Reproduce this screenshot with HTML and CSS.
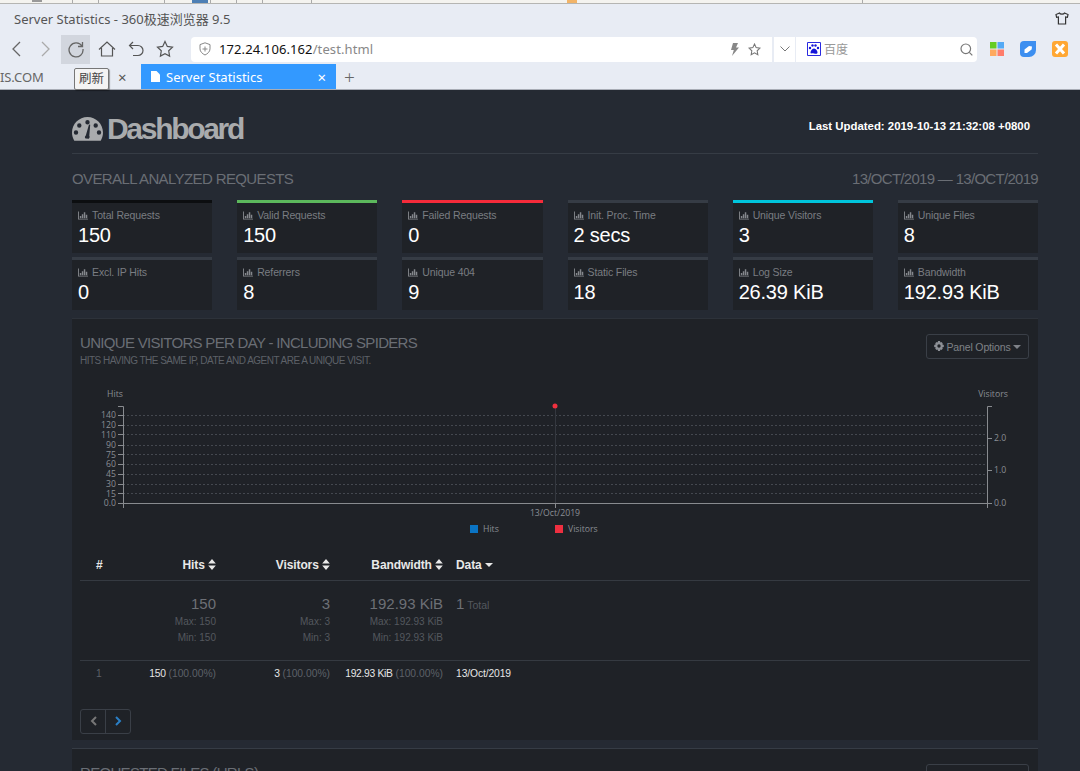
FILE: index.html
```html
<!DOCTYPE html>
<html lang="en">
<head>
<meta charset="UTF-8">
<meta name="viewport" content="width=device-width, initial-scale=1.0">
<title>Server Statistics</title>
<link rel="stylesheet" href="styles.css">
</head>
<body>

<svg class="defs" width="0" height="0">
    <symbol id="bars" viewBox="0 0 11 9">
        <path d="M0 0h1v8H11V9H0z"/>
        <path d="M2 5h1.600v2.500H2zM4.200 3h1.600v4.500H4.200zM6.400 .8h1.600v6.700H6.400zM8.600 3.800h1.600v3.700H8.600z"/>
    </symbol>
    <symbol id="sort" viewBox="0 0 8 11">
        <path d="M4 0l3.800 4.400H.2zM4 11L.2 6.600h7.600z"/>
    </symbol>
    <symbol id="caret" viewBox="0 0 8 4">
        <path d="M0 0h8L4 4z"/>
    </symbol>
</svg>

<div class="browser">
    <div class="other-window"></div>
    <div class="titlebar">
        <span>Server Statistics - 360极速浏览器 9.5</span>
        <svg class="shirt" width="14" height="13" viewBox="0 0 14 13" fill="none" stroke="#333" stroke-width="1.2">
            <path d="M4.5 1L1 2.5 1.6 5.4 3.4 5V12h7.2V5l1.8.4.6-2.9L9.500 1C9 2.500 5 2.500 4.500 1z"/>
        </svg>
    </div>
    <div class="toolbar">
        <svg class="nav-icon" width="16" height="18" viewBox="0 0 16 18" fill="none" stroke="#666" stroke-width="1.3">
            <path d="M11 2L4 9l7 7"/>
        </svg>
        <svg class="nav-icon" width="16" height="18" viewBox="0 0 16 18" fill="none" stroke="#aaa" stroke-width="1.3">
            <path d="M5 2l7 7-7 7"/>
        </svg>
        <div class="reload">
            <svg width="18" height="18" viewBox="0 0 18 18" fill="none" stroke="#666" stroke-width="1.3">
                <path d="M15 6.200A7 7 0 1 0 16 9"/>
                <path d="M15.500 2v4.500H11"/>
            </svg>
        </div>
        <svg class="nav-icon" width="18" height="18" viewBox="0 0 18 18" fill="none" stroke="#555" stroke-width="1.2">
            <path d="M1 9.500L9 2l8 7.500M3.500 8v8h11V8"/>
        </svg>
        <svg class="nav-icon" width="16" height="18" viewBox="0 0 16 18" fill="none" stroke="#555" stroke-width="1.2">
            <path d="M5 2L1.500 5.500 5 9M1.500 5.500H10a4.500 4.500 0 0 1 0 10H5"/>
        </svg>
        <svg class="nav-icon" width="18" height="18" viewBox="0 0 18 18" fill="none" stroke="#555" stroke-width="1.2">
            <path d="M9 1.500l2.300 4.900 5.200.7-3.800 3.700.9 5.300L9 13.600l-4.600 2.500.9-5.300L1.500 7.100l5.200-.7z"/>
        </svg>
        <div class="urlbar">
            <svg width="12" height="14" viewBox="0 0 12 14" fill="none" stroke="#888" stroke-width="1">
                <path d="M6 .8l5 1.800v4.200c0 3-2.500 5-5 6.200-2.500-1.200-5-3.200-5-6.200V2.600z"/>
                <path d="M6 4.500v5M3.500 7h5"/>
            </svg>
            <span class="url"><b>172.24.106.162</b>/test.html</span>
            <svg class="bolt" width="9" height="13" viewBox="0 0 9 13" fill="#888">
                <path d="M3 0h5L6 4.500h3L2 13l1.800-6H1z"/>
            </svg>
            <svg width="13" height="13" viewBox="0 0 18 18" fill="none" stroke="#777" stroke-width="1.500">
                <path d="M9 1.500l2.300 4.900 5.200.7-3.800 3.700.9 5.300L9 13.600l-4.600 2.500.9-5.300L1.500 7.100l5.200-.7z"/>
            </svg>
        </div>
        <div class="dropdown">
            <svg width="10" height="6" viewBox="0 0 10 6" fill="none" stroke="#777" stroke-width="1">
                <path d="M.5.500L5 5 9.500.500"/>
            </svg>
        </div>
        <div class="searchbar">
            <svg width="14" height="14" viewBox="0 0 14 14">
                <path fill="#fff" stroke="#2a2ae0" d="M.5.500h13v13H.5z"/>
                <path fill="#1414d8" d="M7 6.500c2 0 3.500 2.500 3.500 4S9 12 7 11.500 3.500 12 3.500 10.500 5 6.500 7 6.500z"/>
                <circle fill="#1414d8" cx="3" cy="6" r="1.200"/>
                <circle fill="#1414d8" cx="5.500" cy="3.500" r="1.200"/>
                <circle fill="#1414d8" cx="8.500" cy="3.500" r="1.200"/>
                <circle fill="#1414d8" cx="11" cy="6" r="1.200"/>
            </svg>
            <span class="search-text">百度</span>
            <svg class="search-icon" width="13" height="13" viewBox="0 0 13 13" fill="none" stroke="#777" stroke-width="1.200">
                <circle cx="5.800" cy="5.800" r="4.800"/>
                <path d="M9.300 9.300l3 3"/>
            </svg>
        </div>
        <div class="plugins">
            <svg width="14" height="14" viewBox="0 0 14 14">
                <path fill="#66cc22" d="M0 0h6.500v6.500H0z"/>
                <path fill="#55aaf5" d="M7.500 0H14v6.500H7.500z"/>
                <path fill="#ffa95e" d="M0 7.500h6.500V14H0z"/>
                <path fill="#ff7d6b" d="M7.500 7.500H14V14H7.500z"/>
            </svg>
            <svg width="16" height="16" viewBox="0 0 16 16">
                <path fill="#3d8ff0" d="M4 0h12v9a7 7 0 0 1-7 7H4a4 4 0 0 1-4-4V4a4 4 0 0 1 4-4z"/>
                <path fill="#fff" d="M4.500 8.500L9 5l3 .6-.4 3L7 12H4.500z"/>
            </svg>
            <svg width="16" height="16" viewBox="0 0 16 16">
                <rect fill="#ffa733" width="16" height="16" rx="3"/>
                <path fill="none" stroke="#fff" stroke-width="3" d="M4 3.500l8 9M12 3.500l-8 9"/>
            </svg>
        </div>
    </div>
    <div class="tabbar">
        <span class="tab-cut">IS.COM</span>
        <span class="tab-close">×</span>
        <div class="tab-active">
            <svg width="9" height="11" viewBox="0 0 9 11" fill="#fff">
                <path d="M0 0h5.500L9 3.500V11H0z"/>
            </svg>
            <span>Server Statistics</span>
            <span class="tab-x">×</span>
        </div>
        <span class="tab-new">+</span>
        <div class="tooltip">刷新</div>
    </div>
</div>

<div class="page">
    <div class="page-header">
        <h1>
            <svg width="31" height="24" viewBox="0 0 31 24" fill="#a9abad">
                <path fill-rule="evenodd" d="M15.500 0C7 0 0 7 0 15.500c0 3 .8 5.800 2.300 8.300h26.400c1.500-2.500 2.300-5.300 2.300-8.300C31 7 24 0 15.500 0zM15.500 3a2.200 2.200 0 1 1 0 4.400 2.200 2.200 0 0 1 0-4.400zM7.300 6.300a2.200 2.200 0 1 1 0 4.400 2.200 2.200 0 0 1 0-4.400zM23.700 6.300a2.200 2.200 0 1 1 0 4.400 2.200 2.200 0 0 1 0-4.400zM4 13.300a2.200 2.200 0 1 1 0 4.400 2.200 2.200 0 0 1 0-4.400zM27 13.300a2.200 2.200 0 1 1 0 4.400 2.200 2.200 0 0 1 0-4.400zM13.500 21.500c-.9-1-.8-2.300.3-3.100L17 7.500l1.200.3-.9 11c.6 1 .4 2.200-.5 2.900z"/>
            </svg>
            Dashboard
        </h1>
        <p class="last-updated">Last Updated: 2019-10-13 21:32:08 +0800</p>
    </div>

    <div class="overall-head">
        <h3>OVERALL ANALYZED REQUESTS</h3>
        <h3>13/OCT/2019 — 13/OCT/2019</h3>
    </div>

    <div class="cards">
        <div class="card black"><div class="card-label"><svg class="bars"><use href="#bars"/></svg>Total Requests</div><div class="card-value">150</div></div>
        <div class="card green"><div class="card-label"><svg class="bars"><use href="#bars"/></svg>Valid Requests</div><div class="card-value">150</div></div>
        <div class="card red"><div class="card-label"><svg class="bars"><use href="#bars"/></svg>Failed Requests</div><div class="card-value">0</div></div>
        <div class="card"><div class="card-label"><svg class="bars"><use href="#bars"/></svg>Init. Proc. Time</div><div class="card-value">2 secs</div></div>
        <div class="card cyan"><div class="card-label"><svg class="bars"><use href="#bars"/></svg>Unique Visitors</div><div class="card-value">3</div></div>
        <div class="card"><div class="card-label"><svg class="bars"><use href="#bars"/></svg>Unique Files</div><div class="card-value">8</div></div>
        <div class="card"><div class="card-label"><svg class="bars"><use href="#bars"/></svg>Excl. IP Hits</div><div class="card-value">0</div></div>
        <div class="card"><div class="card-label"><svg class="bars"><use href="#bars"/></svg>Referrers</div><div class="card-value">8</div></div>
        <div class="card"><div class="card-label"><svg class="bars"><use href="#bars"/></svg>Unique 404</div><div class="card-value">9</div></div>
        <div class="card"><div class="card-label"><svg class="bars"><use href="#bars"/></svg>Static Files</div><div class="card-value">18</div></div>
        <div class="card"><div class="card-label"><svg class="bars"><use href="#bars"/></svg>Log Size</div><div class="card-value">26.39 KiB</div></div>
        <div class="card"><div class="card-label"><svg class="bars"><use href="#bars"/></svg>Bandwidth</div><div class="card-value">192.93 KiB</div></div>
    </div>

    <div class="panel">
        <div class="panel-head">
            <div>
                <h4>UNIQUE VISITORS PER DAY - INCLUDING SPIDERS</h4>
                <p class="panel-sub">HITS HAVING THE SAME IP, DATE AND AGENT ARE A UNIQUE VISIT.</p>
            </div>
            <button class="options">
                <svg width="10" height="10" viewBox="0 0 10 10" fill="#8d9096">
                    <path fill-rule="evenodd" d="M4 0h2l.3 1.400 1-.5 1.500 1.300-.6 1.100L9.800 4v2l-1.600.6.600 1.200-1.500 1.300-1-.6L6 10H4l-.3-1.500-1 .6L1.200 7.800l.6-1.200L.2 6V4l1.600-.7-.6-1.100L2.700.9l1 .5zM5 3.300a1.700 1.700 0 1 0 0 3.400 1.700 1.700 0 0 0 0-3.400z"/>
                </svg>
                Panel Options
                <svg class="caret"><use href="#caret"/></svg>
            </button>
        </div>

        <svg class="chart" width="950" height="155" viewBox="80 385 950 155">
            <g class="grid">
                <path d="M123 415.500H987M123 425.500H987M123 434.500H987M123 445.500H987M123 454.500H987M123 464.500H987M123 474.500H987M123 484.500H987M123 493.500H987"/>
            </g>
            <path class="vline" d="M555.500 406V503"/>
            <path class="axis" d="M118 406.500H123.500V508M118 415.500H123M118 425.500H123M118 434.500H123M118 445.500H123M118 454.500H123M118 464.500H123M118 474.500H123M118 484.500H123M118 493.500H123M118 503.500H987.500M992 406.500H987.500V508M987.500 438.500H992M987.500 470.500H992M987.500 503.500H992"/>
            <path class="axis" d="M555.500 503.500V508"/>
            <circle cx="555" cy="406" r="2.500" fill="#f0303e"/>
            <text x="115" y="397" text-anchor="middle">Hits</text>
            <text x="993" y="397" text-anchor="middle">Visitors</text>
            <g text-anchor="end">
                <text x="116" y="418">140</text>
                <text x="116" y="428">120</text>
                <text x="116" y="438">110</text>
                <text x="116" y="448">90</text>
                <text x="116" y="458">75</text>
                <text x="116" y="467">60</text>
                <text x="116" y="477">45</text>
                <text x="116" y="487">30</text>
                <text x="116" y="497">15</text>
                <text x="116" y="506">0.0</text>
            </g>
            <text x="994" y="441">2.0</text>
            <text x="994" y="473">1.0</text>
            <text x="994" y="506">0.0</text>
            <text x="555" y="516" text-anchor="middle">13/Oct/2019</text>
            <rect x="470" y="525" width="8" height="8" fill="#0a74c4"/>
            <text x="483" y="532">Hits</text>
            <rect x="555" y="525" width="8" height="8" fill="#ee2f40"/>
            <text x="568" y="532">Visitors</text>
        </svg>

        <table class="data-table">
            <thead>
                <tr>
                    <th class="col-num">#</th>
                    <th class="col-hits">Hits <svg class="sort"><use href="#sort"/></svg></th>
                    <th class="col-vis">Visitors <svg class="sort"><use href="#sort"/></svg></th>
                    <th class="col-bw">Bandwidth <svg class="sort"><use href="#sort"/></svg></th>
                    <th class="col-data">Data <svg class="caret"><use href="#caret"/></svg></th>
                </tr>
            </thead>
            <tbody>
                <tr class="summary">
                    <td></td>
                    <td class="right"><div class="big">150</div><div>Max: 150</div><div>Min: 150</div></td>
                    <td class="right"><div class="big">3</div><div>Max: 3</div><div>Min: 3</div></td>
                    <td class="right"><div class="big">192.93 KiB</div><div>Max: 192.93 KiB</div><div>Min: 192.93 KiB</div></td>
                    <td class="left"><div><span class="big">1</span> <span class="total">Total</span></div></td>
                </tr>
                <tr class="row">
                    <td class="num">1</td>
                    <td class="right"><b>150</b> (100.00%)</td>
                    <td class="right"><b>3</b> (100.00%)</td>
                    <td class="right"><b>192.93 KiB</b> (100.00%)</td>
                    <td class="left"><b>13/Oct/2019</b></td>
                </tr>
            </tbody>
        </table>

        <div class="pager">
            <button>
                <svg width="7" height="10" viewBox="0 0 7 10" fill="none" stroke="#777" stroke-width="2"><path d="M6 1L2 5l4 4"/></svg>
            </button>
            <button>
                <svg width="7" height="10" viewBox="0 0 7 10" fill="none" stroke="#2a7fc5" stroke-width="2"><path d="M1 1l4 4-4 4"/></svg>
            </button>
        </div>
    </div>

    <div class="panel next">
        <div class="panel-head">
            <h4>REQUESTED FILES (URLS)</h4>
            <button class="options">Panel Options</button>
        </div>
    </div>
</div>

</body>
</html>
```

FILE: styles.css
```css
html, body {
    margin: 0;
    padding: 0;
    height: 771px;
    overflow: hidden;
    background: #252a33;
}
body {
    font-family: "Liberation Sans", Arial, sans-serif;
}
.defs {
    position: absolute;
}

/* browser window */
.browser {
    height: 90px;
    background: #e8ecf4;
    font-family: "Noto Sans", "Noto Sans CJK SC", sans-serif;
    color: #555;
    border-bottom: 1px solid #a9adb6;
    box-sizing: border-box;
}
.other-window {
    height: 3px;
    border-bottom: 1px solid #b5b5b2;
    background-color: #f4f3ef;
    background-image:
        linear-gradient(#4d7fb5, #4d7fb5), linear-gradient(#f2b468, #f2b468), linear-gradient(#999, #999),
        linear-gradient(#aaa, #aaa), linear-gradient(#aaa, #aaa), linear-gradient(#aaa, #aaa), linear-gradient(#aaa, #aaa),
        linear-gradient(#aaa, #aaa), linear-gradient(#aaa, #aaa), linear-gradient(#aaa, #aaa), linear-gradient(#aaa, #aaa);
    background-repeat: no-repeat;
    background-size: 16px 3px, 10px 3px, 10px 2px, 1px 3px, 1px 3px, 1px 3px, 1px 3px, 1px 3px, 1px 3px, 1px 3px, 1px 3px;
    background-position: 192px 0, 567px 0, 32px 0, 72px 0, 98px 0, 164px 0, 210px 0, 236px 0, 262px 0, 311px 0, 862px 0;
}
.titlebar {
    height: 29px;
    display: flex;
    align-items: center;
    justify-content: space-between;
    padding: 0 11px 0 14px;
    font-size: 13px;
    color: #555;
    box-sizing: border-box;
}
.toolbar {
    height: 32px;
    display: flex;
    align-items: center;
    padding-left: 9px;
}
.nav-icon {
    margin-right: 12px;
    flex: none;
}
.reload {
    width: 29px;
    height: 29px;
    margin: 0 8px 0 -4px;
    background: #d2d6de;
    display: flex;
    align-items: center;
    justify-content: center;
}
.urlbar {
    width: 581px;
    height: 25px;
    margin-left: 5px;
    background: #fff;
    border-radius: 4px 0 0 4px;
    display: flex;
    align-items: center;
    padding: 0 11px 0 8px;
    box-sizing: border-box;
}
.url {
    margin-left: 8px;
    flex: 1;
    font-size: 13px;
    letter-spacing: .1px;
    color: #888;
}
.url b {
    font-weight: 400;
    color: #111;
}
.bolt {
    margin-right: 9px;
}
.dropdown {
    width: 21px;
    height: 25px;
    margin-left: 2px;
    background: #fff;
    display: flex;
    align-items: center;
    justify-content: center;
}
.searchbar {
    width: 181px;
    height: 25px;
    margin-left: 1px;
    background: #fff;
    border-radius: 0 4px 4px 0;
    display: flex;
    align-items: center;
    padding: 0 4px 0 11px;
    box-sizing: border-box;
}
.search-text {
    flex: 1;
    margin-left: 3px;
    font-size: 12px;
    color: #999;
}
.plugins {
    display: flex;
    align-items: center;
    gap: 16px;
    margin-left: 13px;
}
.tabbar {
    position: relative;
    height: 25px;
    margin-top: -1px;
    display: flex;
    align-items: center;
    font-size: 13px;
}
.tab-cut {
    width: 118px;
    color: #666;
    letter-spacing: -.1px;
}
.tab-close {
    width: 23px;
    font-size: 15px;
    color: #555;
}
.tab-active {
    width: 195px;
    height: 25px;
    background: #3399ff;
    color: #fff;
    display: flex;
    align-items: center;
    padding: 0 10px 0 10px;
    box-sizing: border-box;
    gap: 6px;
}
.tab-active span:first-of-type {
    flex: 1;
}
.tab-x {
    font-size: 15px;
}
.tab-new {
    margin-left: 8px;
    font-size: 19px;
    font-weight: 300;
    color: #666;
}
.tooltip {
    position: absolute;
    left: 74px;
    top: 4px;
    width: 33px;
    height: 20px;
    line-height: 20px;
    background: #f4f4f4;
    border: 1px solid #777;
    border-radius: 2px;
    box-shadow: 1px 1px 1px rgba(0, 0, 0, .35);
    text-align: center;
    font-size: 12.500px;
    color: #444;
}

/* page */
.page {
    padding: 0 42px 0 72px;
}
.page-header {
    height: 63px;
    display: flex;
    justify-content: space-between;
    border-bottom: 1px solid #363c45;
}
h1 {
    margin: 0;
    padding-top: 22px;
    display: flex;
    align-items: center;
    gap: 4px;
    height: 34px;
    font-size: 30px;
    font-weight: 700;
    letter-spacing: -2.300px;
    color: #a9abad;
}
.last-updated {
    margin: 0 8px 0 0;
    padding-top: 30px;
    font-size: 11.400px;
    font-weight: 700;
    color: #fff;
}
.overall-head {
    height: 46px;
    padding-top: 3px;
    box-sizing: border-box;
    display: flex;
    align-items: center;
    justify-content: space-between;
}
h3 {
    margin: 0;
    font-size: 15px;
    font-weight: 400;
    letter-spacing: -.62px;
    color: #6a6e75;
}
h3 + h3 {
    letter-spacing: -.7px;
}
.cards {
    display: grid;
    grid-template-columns: repeat(6, 1fr);
    gap: 4px 25px;
}
.card {
    height: 53px;
    background: #1f2227;
    border-top: 3px solid #363c45;
    padding: 6px 6px 0;
    box-sizing: border-box;
    overflow: hidden;
}
.card.black { border-top-color: #0c0e10; }
.card.green { border-top-color: #5cb85c; }
.card.red { border-top-color: #f52b3a; }
.card.cyan { border-top-color: #00c5dc; }
.card-label {
    font-size: 10.500px;
    line-height: 13px;
    letter-spacing: -.12px;
    color: #7a7d82;
    display: flex;
    align-items: center;
    gap: 4px;
}
.bars {
    width: 10px;
    height: 9px;
    fill: #85888d;
}
.card-value {
    margin-top: 1px;
    font-size: 20px;
    line-height: 24px;
    letter-spacing: -.2px;
    color: #fff;
}

.panel {
    margin-top: 8px;
    background: #1f2227;
    border-top: 1px solid #2d323a;
    padding: 0 8px;
    height: 422px;
    box-sizing: border-box;
}
.panel.next {
    margin-top: 8px;
    height: 23px;
    overflow: hidden;
    border-top: 1px solid #363c45;
}
.panel-head {
    display: flex;
    justify-content: space-between;
    padding-top: 15px;
    height: 66px;
    box-sizing: border-box;
}
h4 {
    margin: 0;
    font-size: 15px;
    line-height: 18px;
    font-weight: 400;
    letter-spacing: -.69px;
    color: #6a6e75;
}
.panel-sub {
    margin: 3px 0 0;
    font-size: 10px;
    line-height: 12px;
    letter-spacing: -.52px;
    color: #5d6168;
}
.options {
    width: 103px;
    height: 25px;
    margin-right: 1px;
    background: transparent;
    border: 1px solid #3a3f47;
    border-radius: 3px;
    font: 10.500px "Liberation Sans", Arial, sans-serif;
    letter-spacing: -.15px;
    color: #7f8288;
    padding: 0;
}
.caret {
    width: 8px;
    height: 4px;
    fill: currentColor;
    vertical-align: 2px;
}
.chart {
    display: block;
    font-family: "Open Sans", sans-serif;
    font-size: 8.700px;
    fill: #8a8e94;
}
.grid path {
    stroke: #44484f;
    stroke-width: 1;
    stroke-dasharray: 2 2;
    fill: none;
}
.vline {
    stroke: #34383f;
    fill: none;
}
.axis {
    stroke: #888b8f;
    fill: none;
}

.data-table {
    width: 950px;
    margin-top: 10px;
    border-collapse: collapse;
    table-layout: fixed;
    font-size: 10.300px;
}
.col-num { width: 51px; }
.col-hits { width: 86px; }
.col-vis { width: 114px; }
.col-bw { width: 113px; }
th {
    height: 30px;
    padding: 0 1px 0 0;
    box-sizing: border-box;
    border-bottom: 1px solid #353a41;
    text-align: right;
    font-size: 12px;
    letter-spacing: -.1px;
    color: #e8e8e8;
    vertical-align: middle;
}
th.col-num {
    text-align: left;
    padding-left: 16px;
}
th.col-data {
    text-align: left;
    padding-left: 12px;
}
.sort {
    width: 8px;
    height: 11px;
    fill: currentColor;
    vertical-align: -1px;
}
.summary td {
    height: 80px;
    border-bottom: 1px solid #353a41;
    color: #54585e;
    line-height: 16px;
    vertical-align: top;
    padding-top: 13px;
    box-sizing: border-box;
    font-size: 10px;
}
.right {
    text-align: right;
}
.summary td.left, .row td.left {
    padding-left: 12px;
}
.summary .big {
    font-size: 15px;
    color: #6d7076;
    line-height: 20px;
}
.summary .total {
    font-size: 10.500px;
    color: #54585e;
}
.row td {
    height: 24px;
    padding-bottom: 3px;
    color: #5d6167;
    vertical-align: middle;
}
.row b {
    font-weight: 400;
    color: #e6e6e6;
    letter-spacing: -.3px;
}
.row .left b {
    letter-spacing: -.1px;
}
.row .num {
    padding-left: 16px;
    color: #5d6167;
    box-sizing: border-box;
}
.pager {
    display: flex;
    width: 51px;
    height: 25px;
    margin-top: 20px;
    border: 1px solid #3a3f47;
    border-radius: 3px;
    box-sizing: border-box;
}
.pager button {
    flex: 1;
    background: transparent;
    border: 0;
    padding: 0;
}
.pager button:first-child {
    border-right: 1px solid #3a3f47;
}
```
